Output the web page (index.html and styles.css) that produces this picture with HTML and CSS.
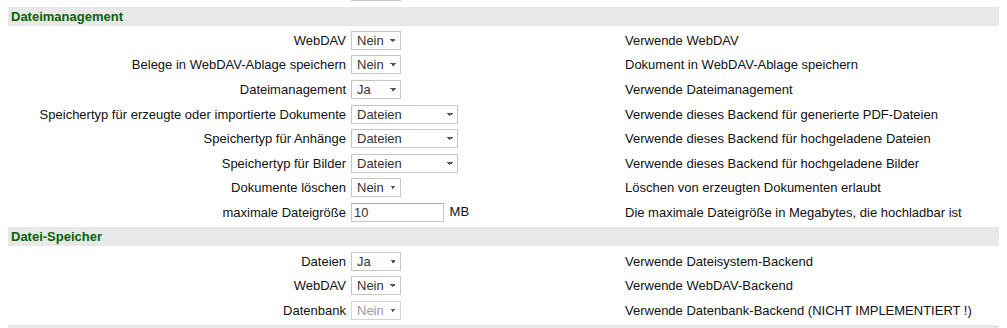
FILE: index.html
```html
<!DOCTYPE html>
<html lang="de">
<head>
  <meta charset="UTF-8">
  <title>Mandantenkonfiguration</title>
  <link rel="stylesheet" href="styles.css">
</head>
<body>
  <table class="config-table">
    <!-- end of previous section -->
    <tr>
      <td class="label"></td>
      <td class="field">
        <select class="yes-no"><option>Nein</option></select>
      </td>
      <td class="desc"></td>
    </tr>

    <tr class="section">
      <th colspan="3">Dateimanagement</th>
    </tr>
    <tr>
      <td class="label">WebDAV</td>
      <td class="field"><select class="yes-no"><option>Nein</option></select></td>
      <td class="desc">Verwende WebDAV</td>
    </tr>
    <tr>
      <td class="label">Belege in WebDAV-Ablage speichern</td>
      <td class="field"><select class="yes-no"><option>Nein</option></select></td>
      <td class="desc">Dokument in WebDAV-Ablage speichern</td>
    </tr>
    <tr>
      <td class="label">Dateimanagement</td>
      <td class="field"><select class="yes-no"><option>Ja</option></select></td>
      <td class="desc">Verwende Dateimanagement</td>
    </tr>
    <tr>
      <td class="label">Speichertyp für erzeugte oder importierte Dokumente</td>
      <td class="field"><select class="backend"><option>Dateien</option></select></td>
      <td class="desc">Verwende dieses Backend für generierte PDF-Dateien</td>
    </tr>
    <tr>
      <td class="label">Speichertyp für Anhänge</td>
      <td class="field"><select class="backend"><option>Dateien</option></select></td>
      <td class="desc">Verwende dieses Backend für hochgeladene Dateien</td>
    </tr>
    <tr>
      <td class="label">Speichertyp für Bilder</td>
      <td class="field"><select class="backend"><option>Dateien</option></select></td>
      <td class="desc">Verwende dieses Backend für hochgeladene Bilder</td>
    </tr>
    <tr>
      <td class="label">Dokumente löschen</td>
      <td class="field"><select class="yes-no"><option>Nein</option></select></td>
      <td class="desc">Löschen von erzeugten Dokumenten erlaubt</td>
    </tr>
    <tr>
      <td class="label">maximale Dateigröße</td>
      <td class="field"><input type="text" class="size-input" value="10"> MB</td>
      <td class="desc">Die maximale Dateigröße in Megabytes, die hochladbar ist</td>
    </tr>

    <tr class="section">
      <th colspan="3">Datei-Speicher</th>
    </tr>
    <tr>
      <td class="label">Dateien</td>
      <td class="field"><select class="yes-no"><option>Ja</option></select></td>
      <td class="desc">Verwende Dateisystem-Backend</td>
    </tr>
    <tr>
      <td class="label">WebDAV</td>
      <td class="field"><select class="yes-no"><option>Nein</option></select></td>
      <td class="desc">Verwende WebDAV-Backend</td>
    </tr>
    <tr>
      <td class="label">Datenbank</td>
      <td class="field"><select class="yes-no" disabled><option>Nein</option></select></td>
      <td class="desc">Verwende Datenbank-Backend (NICHT IMPLEMENTIERT !)</td>
    </tr>

    <!-- next section starts below the fold -->
    <tr class="section">
      <th colspan="3">&nbsp;</th>
    </tr>
  </table>
</body>
</html>
```

FILE: styles.css
```css
body {
  margin: 0 8px;
  font-family: 'Liberation Sans', Arial, sans-serif;
  font-size: 13px;
  color: #111;
  background: #fff;
}

.config-table {
  width: 994px;
  margin-top: -23px;
  border-collapse: separate;
  border-spacing: 0 5px;
  table-layout: fixed;
}

.config-table td {
  height: 19.6px;
  padding: 0;
  vertical-align: middle;
  white-space: nowrap;
}

.section th {
  height: 19px;
  padding: 0 3px;
  background: #e8e8e8;
  color: #006400;
  font-weight: bold;
  text-align: left;
  vertical-align: middle;
}

td.label {
  width: 338px;
  padding-right: 3px;
  text-align: right;
}

td.field {
  width: 272px;
  padding-left: 2px;
}

td.desc {
  padding-left: 2px;
}

select {
  appearance: none;
  -webkit-appearance: none;
  box-sizing: border-box;
  height: 19px;
  margin: 0;
  padding: 0 0 0 5px;
  font-family: 'Liberation Sans', Arial, sans-serif;
  font-size: 13px;
  color: #333;
  border: 1px solid #c6c6c6;
  border-radius: 0;
  background-color: #fff;
  background-image:
    linear-gradient(45deg, transparent 50%, #555 50%),
    linear-gradient(135deg, #555 50%, transparent 50%);
  background-size: 3px 3px, 3px 3px;
  background-position: right 7px top 7px, right 4px top 7px;
  background-repeat: no-repeat;
  vertical-align: middle;
}

select.yes-no {
  width: 50px;
}

select.backend {
  width: 107px;
}

select:disabled {
  color: #999;
  border-color: #d4d4d4;
  opacity: 1;
}

.size-input {
  box-sizing: border-box;
  width: 93px;
  height: 19px;
  margin: 0 2px 0 0;
  padding: 0 2px;
  font-family: 'Liberation Sans', Arial, sans-serif;
  font-size: 13px;
  color: #333;
  border: 1px solid #c6c6c6;
  border-top-color: #a8a8a8;
  vertical-align: middle;
}
```
